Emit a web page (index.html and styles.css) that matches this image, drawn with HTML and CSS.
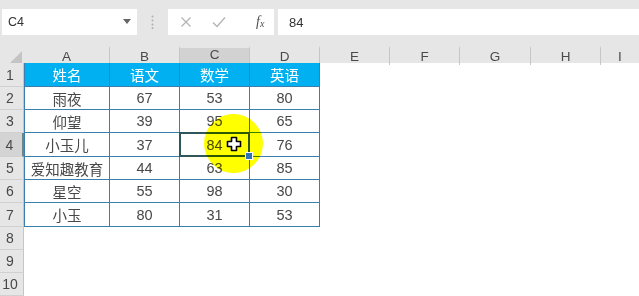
FILE: index.html
```html
<!DOCTYPE html>
<html lang="zh">
<head>
<meta charset="utf-8">
<link rel="stylesheet" href="styles.css">
</head>
<body>
<div class="app">
  <div class="toolbar">
    <div class="namebox"><span>C4</span><svg class="dd" width="8" height="5" viewBox="0 0 8 5"><path d="M0 0h8L4 5z" fill="#666"/></svg></div>
    <div class="vsep"><svg width="3" height="14" viewBox="0 0 3 14"><circle cx="1.5" cy="1.5" r="1" fill="#b0b0b0"/><circle cx="1.5" cy="5.5" r="1" fill="#b0b0b0"/><circle cx="1.5" cy="9.5" r="1" fill="#b0b0b0"/><circle cx="1.5" cy="13" r="1" fill="#b0b0b0"/></svg></div>
    <div class="fbtns">
      <svg width="12" height="12" viewBox="0 0 12 12"><path d="M1.5 1.5l9 9M10.5 1.5l-9 9" stroke="#b4b4b4" stroke-width="1.3" fill="none"/></svg>
      <svg width="14" height="12" viewBox="0 0 14 12"><path d="M1 6.5l4 4L13 1.5" stroke="#b4b4b4" stroke-width="1.3" fill="none"/></svg>
      <span class="fx">f<sub>x</sub></span>
    </div>
    <div class="finput">84</div>
  </div>

  <div class="sheet">
    <div class="hrow">
      <div class="corner"><svg width="12" height="12" viewBox="0 0 12 12"><path d="M12 0V12H0z" fill="#c4c4c4"/></svg></div>
      <div class="ch">A</div><div class="ch">B</div><div class="ch selc">C</div><div class="ch">D</div>
      <div class="ch">E</div><div class="ch">F</div><div class="ch">G</div><div class="ch">H</div><div class="ch last">I</div>
    </div>

    <div class="row r24">
      <div class="rh">1</div>
      <div class="c th first">姓名</div><div class="c th">语文</div><div class="c th">数学</div><div class="c th">英语</div>
      <div class="e"></div>
    </div>
    <div class="row r23">
      <div class="rh">2</div>
      <div class="c first">雨夜</div><div class="c">67</div><div class="c">53</div><div class="c">80</div>
      <div class="e"></div>
    </div>
    <div class="row r23">
      <div class="rh">3</div>
      <div class="c first">仰望</div><div class="c">39</div><div class="c">95</div><div class="c">65</div>
      <div class="e"></div>
    </div>
    <div class="row r24">
      <div class="rh selr">4</div>
      <div class="c first">小玉儿</div><div class="c">37</div><div class="c sel">84</div><div class="c">76</div>
      <div class="e"></div>
    </div>
    <div class="row r23">
      <div class="rh">5</div>
      <div class="c first">爱知趣教育</div><div class="c">44</div><div class="c">63</div><div class="c">85</div>
      <div class="e"></div>
    </div>
    <div class="row r23">
      <div class="rh">6</div>
      <div class="c first">星空</div><div class="c">55</div><div class="c">98</div><div class="c">30</div>
      <div class="e"></div>
    </div>
    <div class="row r24">
      <div class="rh">7</div>
      <div class="c first">小玉</div><div class="c">80</div><div class="c">31</div><div class="c">53</div>
      <div class="e"></div>
    </div>
    <div class="row r23"><div class="rh">8</div><div class="e wide"></div></div>
    <div class="row r23"><div class="rh">9</div><div class="e wide"></div></div>
    <div class="row r23"><div class="rh">10</div><div class="e wide"></div></div>

    <div class="spot"></div>
    <svg class="cursor" width="16" height="16" viewBox="0 0 16 16"><path d="M5.5 1.5h5v4h4v5h-4v4h-5v-4h-4v-5h4z" fill="#fff" stroke="#000" stroke-width="1.6" stroke-linejoin="round"/></svg>
  </div>
</div>
</body>
</html>
```

FILE: styles.css
```css
* { box-sizing: border-box; }
html, body { margin: 0; padding: 0; }
body {
  width: 639px;
  height: 296px;
  overflow: hidden;
  background: #fff;
  font-family: "Liberation Sans", "Noto Sans CJK SC", sans-serif;
  color: #404040;
}
.app { width: 639px; height: 296px; }

.toolbar {
  height: 46px;
  background: #e6e6e6;
  display: flex;
  align-items: flex-start;
  padding: 9px 0 0 2px;
}
.namebox {
  width: 135px;
  height: 26px;
  background: #fff;
  display: flex;
  align-items: center;
  justify-content: space-between;
  padding: 0 6px 0 6px;
  font-size: 12.5px;
  color: #333;
}
.namebox .dd { margin-top: -1px; }
.vsep {
  width: 31px;
  height: 26px;
  display: flex;
  align-items: center;
  justify-content: center;
}
.fbtns {
  width: 106px;
  height: 26px;
  background: #fff;
  display: flex;
  align-items: center;
  padding-left: 12px;
  gap: 20px;
}
.fx {
  font-family: "Liberation Serif", serif;
  font-style: italic;
  font-size: 14px;
  color: #505050;
  margin-left: 10px;
}
.fx sub { font-size: 10px; vertical-align: -1px; }
.finput {
  flex: 1;
  height: 26px;
  margin-left: 4px;
  background: #fff;
  display: flex;
  align-items: center;
  padding-left: 11px;
  font-size: 13px;
  color: #333;
}

.sheet { position: relative; height: 250px; }

.hrow {
  display: grid;
  grid-template-columns: 24px 86px 70px 70px 70px 70px 70px 71px 70px 1fr;
  height: 17px;
  background: #e6e6e6;
}
.corner {
  display: flex;
  align-items: flex-end;
  justify-content: flex-end;
  padding: 0 2px 2px 0;
}
.ch {
  font-size: 13.5px;
  line-height: 17px;
  text-align: center;
  color: #4a4a4a;
  border-right: 1px solid #c6c6c6;
  border-top: 2px solid #e6e6e6;
}
.ch.last { border-right: none; }
.ch.selc {
  background: #d2d2d2;
  border-bottom: 2px solid #6f8585;
  line-height: 14px;
}

.row {
  display: grid;
  grid-template-columns: 24px 86px 70px 70px 70px 1fr;
}
.r24 { height: 24px; }
.r23 { height: 23px; }
.rh {
  background: #e6e6e6;
  border-bottom: 1px solid #d0d0d0;
  border-right: 1px solid #c6c6c6;
  font-size: 14px;
  color: #484848;
  display: flex;
  align-items: center;
  justify-content: center;
  padding-right: 3px;
}
.rh.selr { background: #d4d4d4; border-right: 2px solid #6f8585; }
.c {
  border-right: 1px solid #3a7fb0;
  border-bottom: 1px solid #3a7fb0;
  display: flex;
  align-items: center;
  justify-content: center;
  font-size: 14.5px;
  color: #484848;
}
.c.first { border-left: 1px solid #3a7fb0; }
.c.th {
  background: #00b0f0;
  color: #fff;
  border-right-color: #3a7fb0;
}
.wide { grid-column: 2 / -1; }

.sel { position: relative; }
.sel::after {
  content: "";
  position: absolute;
  left: -1px;
  top: -1px;
  right: -1px;
  bottom: -1px;
  border: 2px solid #2f5757;
}
.sel::before {
  content: "";
  position: absolute;
  right: -4px;
  bottom: -4px;
  width: 6px;
  height: 6px;
  background: #2f75b5;
  border: 1px solid #fff;
  z-index: 2;
}

.spot {
  position: absolute;
  left: 204px;
  top: 68px;
  width: 59px;
  height: 59px;
  border-radius: 50%;
  background: #ffff00;
  mix-blend-mode: multiply;
}
.cursor {
  position: absolute;
  left: 226px;
  top: 90px;
}
```
